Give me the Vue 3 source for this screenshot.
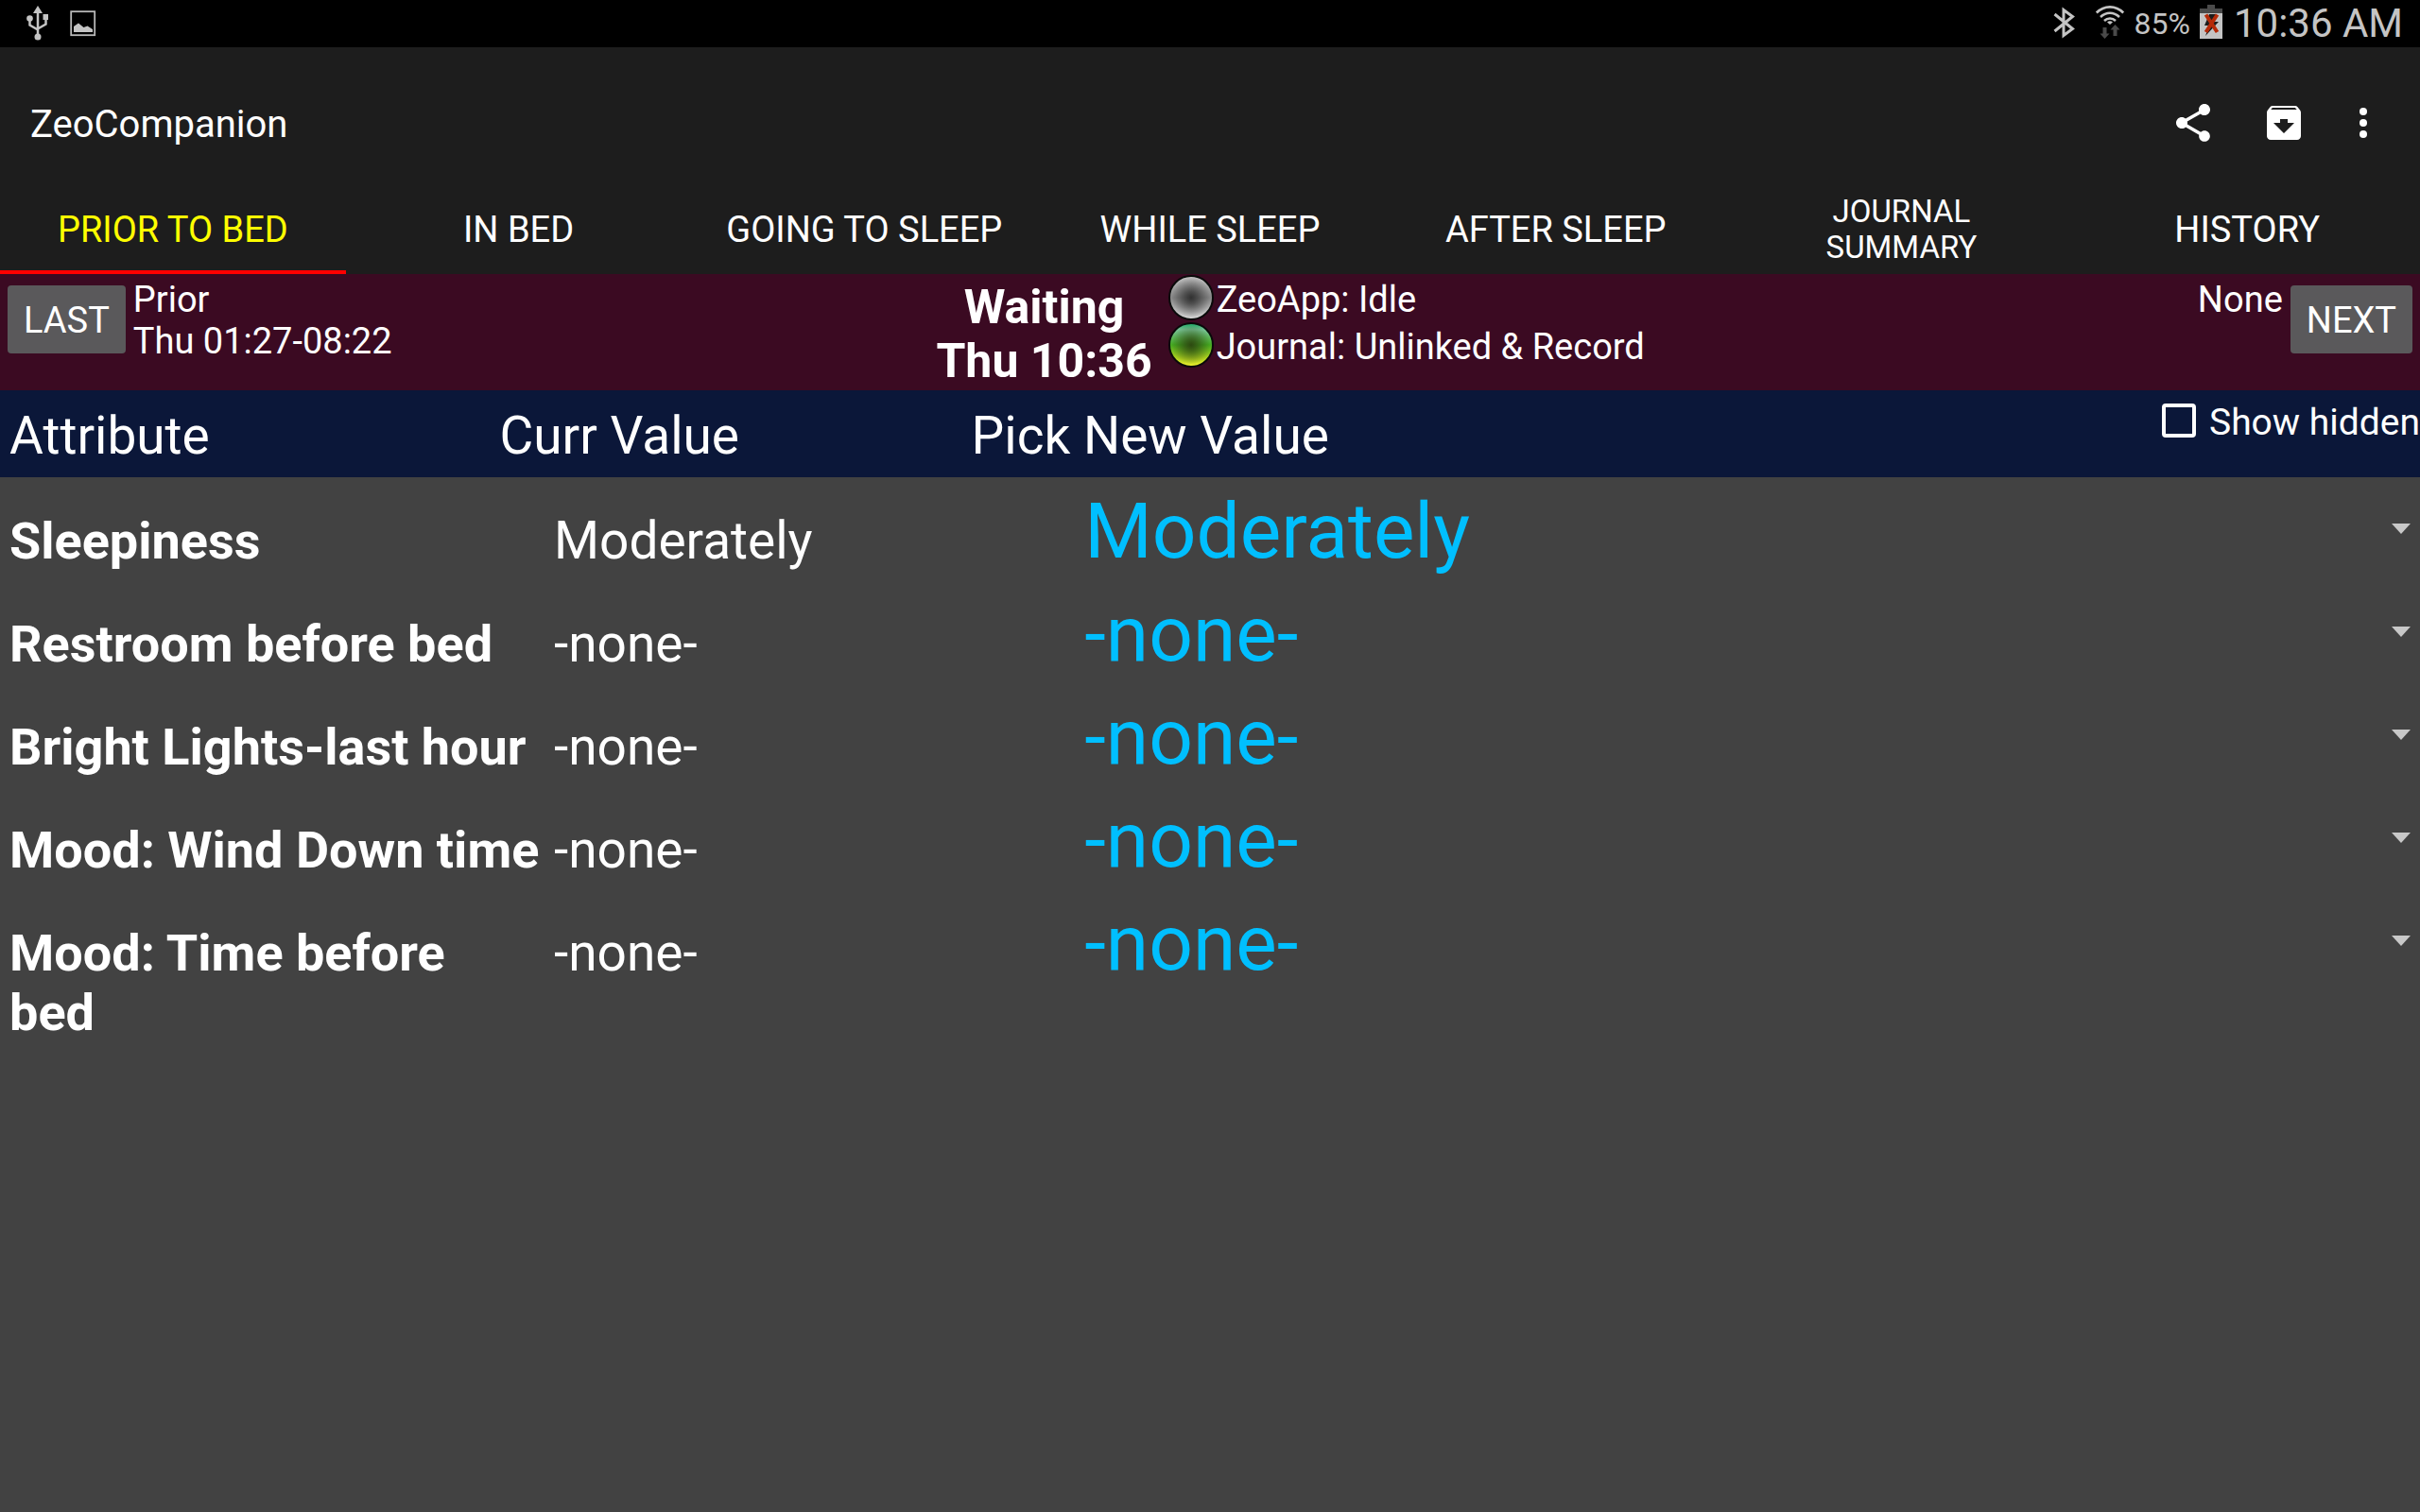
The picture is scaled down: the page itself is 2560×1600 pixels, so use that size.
<script setup>
import { ref } from 'vue'

const tabs = [
  { label: 'PRIOR TO BED', active: true },
  { label: 'IN BED' },
  { label: 'GOING TO SLEEP' },
  { label: 'WHILE SLEEP' },
  { label: 'AFTER SLEEP' },
  { label: 'JOURNAL SUMMARY', small: true },
  { label: 'HISTORY' },
]

const levels = ['-none-', 'Slightly', 'Moderately', 'Very']
const attributes = ref([
  { name: 'Sleepiness', value: 'Moderately', pick: 'Moderately' },
  { name: 'Restroom before bed', value: '-none-', pick: '-none-' },
  { name: 'Bright Lights-last hour', value: '-none-', pick: '-none-' },
  { name: 'Mood: Wind Down time', value: '-none-', pick: '-none-' },
  { name: 'Mood: Time before bed', value: '-none-', pick: '-none-' },
])
const showHidden = ref(false)
</script>

<template>
  <div class="screen">
    <div class="system-bar">
      <div class="system-group notices">
        <svg class="usb" width="24" height="38" viewBox="0 0 24 38" fill="#c4c4c4">
          <path d="M12 0 L17 8 H7 Z" />
          <path d="M12 6 V32 M3.500 14 V20.500 L12 25.500 M20.500 12 V19.500 L12 24.500" fill="none" stroke="#c4c4c4" stroke-width="2.500" />
          <circle cx="3.500" cy="13.500" r="3.300" />
          <rect x="17.500" y="9" width="5.500" height="6" />
          <circle cx="12" cy="33" r="3.500" />
        </svg>
        <svg width="28" height="28" viewBox="0 0 28 28">
          <rect x="1.200" y="1.200" width="25" height="25" fill="none" stroke="#b8b8b8" stroke-width="1.800" />
          <path d="M4 23 V17 L9 13.500 L14.500 18 L18.500 16.500 L24 20 V23 Z" fill="#c4c4c4" />
        </svg>
      </div>
      <div class="system-group">
        <svg class="bluetooth" width="24" height="36" viewBox="0 0 24 36" fill="none" stroke="#c4c4c4" stroke-width="3">
          <path d="M1.500 9 L20.500 24.500 L11 31.500 V4.500 L20.500 11.500 L1.500 27" />
        </svg>
        <svg class="wifi" width="32" height="36" viewBox="0 0 32 36" fill="none" stroke="#c4c4c4" stroke-width="2.600">
          <path d="M1.800 7.500 C10 -0.700 22 -0.700 30.200 7.500" />
          <path d="M6 12 C12 6.300 20 6.300 26 12" />
          <path d="M10 16 C13.500 12.700 18.500 12.700 22 16" />
          <path d="M13 17.500 A4.500 4.500 0 0 1 19 17.500 L16 20 Z" fill="#c4c4c4" stroke="none" />
          <path d="M8.500 23 H12.500 V29.500 H15.500 L10.500 35 L5.500 29.500 H8.500 Z M19.500 32 H23.500 V25.500 H26.500 L21.500 20 L16.500 25.500 H19.500 Z" fill="#4a4a4a" stroke="none" />
        </svg>
        <span class="percent">85%</span>
        <svg class="battery" width="24" height="36" viewBox="0 0 24 36">
          <path d="M8 0 H16 V4 H24 V9 H0 V4 H8 Z" fill="#4a4a4a" />
          <rect y="9" width="24" height="27" fill="#c4c4c4" />
          <path d="M10 10 H18 L15 18 H20 L6 33 L10 22 H5 Z" fill="#1c1c1c" />
          <path d="M6.500 10.500 L18.500 29 M18.500 10.500 L6.500 29" stroke="#b62a08" stroke-width="4" />
        </svg>
        <time class="clock">10:36 AM</time>
      </div>
    </div>

    <header class="app-bar">
      <h1>ZeoCompanion</h1>
      <div class="actions">
        <button type="button" class="action" aria-label="Share">
          <svg width="48" height="48" viewBox="0 0 24 24" fill="#fff">
            <path d="M18 16.080c-.760 0-1.440.300-1.960.770L8.910 12.700c.050-.230.090-.460.090-.700s-.040-.470-.090-.700l7.050-4.110c.540.500 1.250.810 2.040.810 1.660 0 3-1.340 3-3s-1.340-3-3-3-3 1.340-3 3c0 .240.040.470.090.700L8.040 9.810C7.500 9.310 6.790 9 6 9c-1.660 0-3 1.340-3 3s1.340 3 3 3c.790 0 1.500-.310 2.040-.810l7.120 4.160c-.050.210-.080.430-.080.650 0 1.610 1.310 2.920 2.920 2.920s2.920-1.310 2.920-2.920-1.310-2.920-2.920-2.920z" />
          </svg>
        </button>
        <button type="button" class="action" aria-label="Archive">
          <svg width="48" height="48" viewBox="0 0 24 24" fill="#fff" fill-rule="evenodd">
            <path d="M20.540 5.230l-1.390-1.680C18.880 3.210 18.470 3 18 3H6c-.470 0-.880.210-1.160.550L3.460 5.230C3.170 5.570 3 6.020 3 6.500V19c0 1.100.900 2 2 2h14c1.100 0 2-.900 2-2V6.500c0-.480-.170-.930-.460-1.270z M12 17.500L6.500 12H10v-2h4v2h3.500L12 17.500z M5.120 5l.810-1h12l.940 1H5.120z" />
          </svg>
        </button>
        <button type="button" class="action more" aria-label="More options">
          <svg width="48" height="48" viewBox="0 0 24 24" fill="#fff">
            <circle cx="12" cy="6" r="2" /><circle cx="12" cy="12" r="2" /><circle cx="12" cy="18" r="2" />
          </svg>
        </button>
      </div>
    </header>

    <nav class="tabs">
      <a v-for="tab in tabs" :key="tab.label" href="#" class="tab" :class="{ active: tab.active, small: tab.small }">
        <span>{{ tab.label }}</span>
      </a>
    </nav>

    <section class="session">
      <div class="side">
        <button type="button" class="step">LAST</button>
        <p>Prior<br />Thu 01:27-08:22</p>
      </div>
      <div class="middle">
        <p class="now">Waiting<br />Thu 10:36</p>
        <ul class="states">
          <li>
            <svg width="50" height="50" viewBox="0 0 50 50">
              <defs>
                <linearGradient id="idle-rim" x1="0" y1="0" x2="0" y2="1">
                  <stop offset="0" stop-color="#c8c8c8" /><stop offset=".5" stop-color="#8c8c8c" /><stop offset="1" stop-color="#e2e2e2" />
                </linearGradient>
                <radialGradient id="idle-core">
                  <stop offset="0" stop-color="#2c2c2c" stop-opacity=".95" /><stop offset=".3" stop-color="#2c2c2c" stop-opacity=".7" /><stop offset="1" stop-color="#2c2c2c" stop-opacity="0" />
                </radialGradient>
              </defs>
              <circle cx="25" cy="25" r="23" fill="url(#idle-rim)" stroke="#0a0a0a" stroke-width="2" />
              <circle cx="25" cy="25" r="22" fill="url(#idle-core)" />
            </svg>
            <span>ZeoApp: Idle</span>
          </li>
          <li>
            <svg width="50" height="50" viewBox="0 0 50 50">
              <defs>
                <linearGradient id="record-rim" x1="0" y1="0" x2="0" y2="1">
                  <stop offset="0" stop-color="#12a860" /><stop offset=".15" stop-color="#7cc89c" /><stop offset=".5" stop-color="#45b021" /><stop offset=".8" stop-color="#b4d820" /><stop offset="1" stop-color="#ffff30" />
                </linearGradient>
                <radialGradient id="record-core">
                  <stop offset="0" stop-color="#2c4410" stop-opacity=".95" /><stop offset=".3" stop-color="#2c4410" stop-opacity=".7" /><stop offset="1" stop-color="#2c4410" stop-opacity="0" />
                </radialGradient>
              </defs>
              <circle cx="25" cy="25" r="23" fill="url(#record-rim)" stroke="#0a0a0a" stroke-width="2" />
              <circle cx="25" cy="25" r="22" fill="url(#record-core)" />
            </svg>
            <span>Journal: Unlinked &amp; Record</span>
          </li>
        </ul>
      </div>
      <div class="side end">
        <p>None</p>
        <button type="button" class="step">NEXT</button>
      </div>
    </section>

    <table class="attributes">
      <thead>
        <tr>
          <th scope="col">Attribute</th>
          <th scope="col">Curr Value</th>
          <th scope="col">Pick New Value</th>
          <td>
            <label class="show-hidden">
              <input v-model="showHidden" type="checkbox" />
              <span>Show hidden</span>
            </label>
          </td>
        </tr>
      </thead>
      <tbody>
        <tr v-for="(item, i) in attributes" :key="item.name">
          <th scope="row"><label :for="'pick-' + i">{{ item.name }}</label></th>
          <td>{{ item.value }}</td>
          <td class="pick">
            <select :id="'pick-' + i" v-model="item.pick">
              <option v-for="level in levels" :key="level">{{ level }}</option>
            </select>
            <svg width="20" height="11" viewBox="0 0 20 11"><path d="M0 0 H20 L10 11 Z" fill="#c8c8c8" /></svg>
          </td>
        </tr>
      </tbody>
    </table>
  </div>
</template>

<style>
body {
  margin: 0;
  background: #424242;
}
</style>

<style scoped>
.screen {
  min-height: 100vh;
  background: #424242;
  color: #fff;
  font-family: Roboto, "Noto Sans", sans-serif;
  font-size: 38px;
  line-height: 44px;
}

p, h1, ul {
  margin: 0;
  padding: 0;
  font-weight: 400;
}

svg {
  display: block;
  flex: none;
}

button {
  border: 0;
  padding: 0;
  color: inherit;
  font: inherit;
}

.system-bar {
  display: flex;
  justify-content: space-between;
  height: 50px;
  padding: 0 18px 0 28px;
  background: #000;
  color: #c4c4c4;
}

.system-group {
  display: flex;
  align-items: center;
}

.notices {
  gap: 22px;
}

.bluetooth {
  margin: 0 20px 2px 0;
}

.wifi {
  margin: 0 10px 2px 0;
}

.percent {
  font-size: 32px;
}

.battery {
  margin: 0 12px 4px 10px;
}

.clock {
  font-size: 42px;
}

.app-bar {
  display: flex;
  align-items: center;
  justify-content: space-between;
  height: 160px;
  padding: 0 36px 0 32px;
  background: #1d1d1d;
}

h1 {
  padding-top: 4px;
  font-size: 40px;
}

.actions {
  display: flex;
  gap: 48px;
}

.action {
  width: 48px;
  background: none;
}

.more {
  margin-left: -12px;
}

.tabs {
  display: flex;
  height: 80px;
  background: #1d1d1d;
}

.tab {
  display: flex;
  flex: 1 1 0;
  min-width: 0;
  align-items: center;
  justify-content: center;
  box-sizing: border-box;
  padding-bottom: 10px;
  border-bottom: 4px solid transparent;
  color: #fff;
  text-align: center;
  text-decoration: none;
}

.tab.active {
  border-color: #f00;
  color: #ff0;
}

.tab.small {
  font-size: 33px;
  line-height: 38px;
}

.tab.small span {
  width: min-content;
}

.session {
  display: grid;
  grid-template-columns: 39% auto 1fr;
  height: 123px;
  background: #3b0a22;
}

.side {
  display: flex;
  align-items: flex-start;
  gap: 8px;
  padding: 5px 8px;
}

.end {
  justify-content: flex-end;
}

.step {
  height: 72px;
  margin-top: 7px;
  padding: 2px 17px 0;
  border-radius: 4px;
  background: #5a595b;
}

.middle {
  display: flex;
  gap: 16px;
  margin-left: -8px;
}

.now {
  padding-top: 7px;
  font-size: 50px;
  font-weight: 700;
  line-height: 57px;
  text-align: center;
}

.states {
  list-style: none;
}

.states li {
  display: flex;
  align-items: center;
  gap: 2px;
}

.states span {
  padding-top: 4px;
}

.attributes {
  display: block;
  font-size: 55px;
  line-height: 63px;
}

thead, tbody {
  display: block;
}

thead {
  background: #0b1739;
}

tr {
  display: grid;
}

th, td {
  padding: 0 0 0 10px;
  text-align: left;
}

thead tr {
  grid-template-columns: 20.25% 19.5% 1fr auto;
  height: 92px;
}

thead th {
  padding-top: 17px;
  font-weight: 400;
}

.show-hidden {
  display: flex;
  align-items: center;
  gap: 14px;
  padding-top: 12px;
  font-size: 39px;
  line-height: 44px;
}

.show-hidden input {
  width: 36px;
  height: 36px;
  margin: 0 0 4px;
  border: 4px solid #fff;
  border-radius: 4px;
  appearance: none;
}

tbody tr {
  grid-template-columns: 22.5% 22% 1fr;
  min-height: 109px;
}

tbody th,
tbody td {
  padding-top: 36px;
}

tbody th {
  padding-right: 4px;
  font-size: 54px;
}

tbody .pick {
  position: relative;
  padding: 0;
}

select {
  width: 100%;
  height: 109px;
  border: 0;
  padding: 4px 40px 0 8px;
  appearance: none;
  background: none;
  color: #00bfff;
  font-family: inherit;
  font-size: 82px;
}

.pick svg {
  position: absolute;
  top: 49px;
  right: 10px;
  pointer-events: none;
}
</style>
